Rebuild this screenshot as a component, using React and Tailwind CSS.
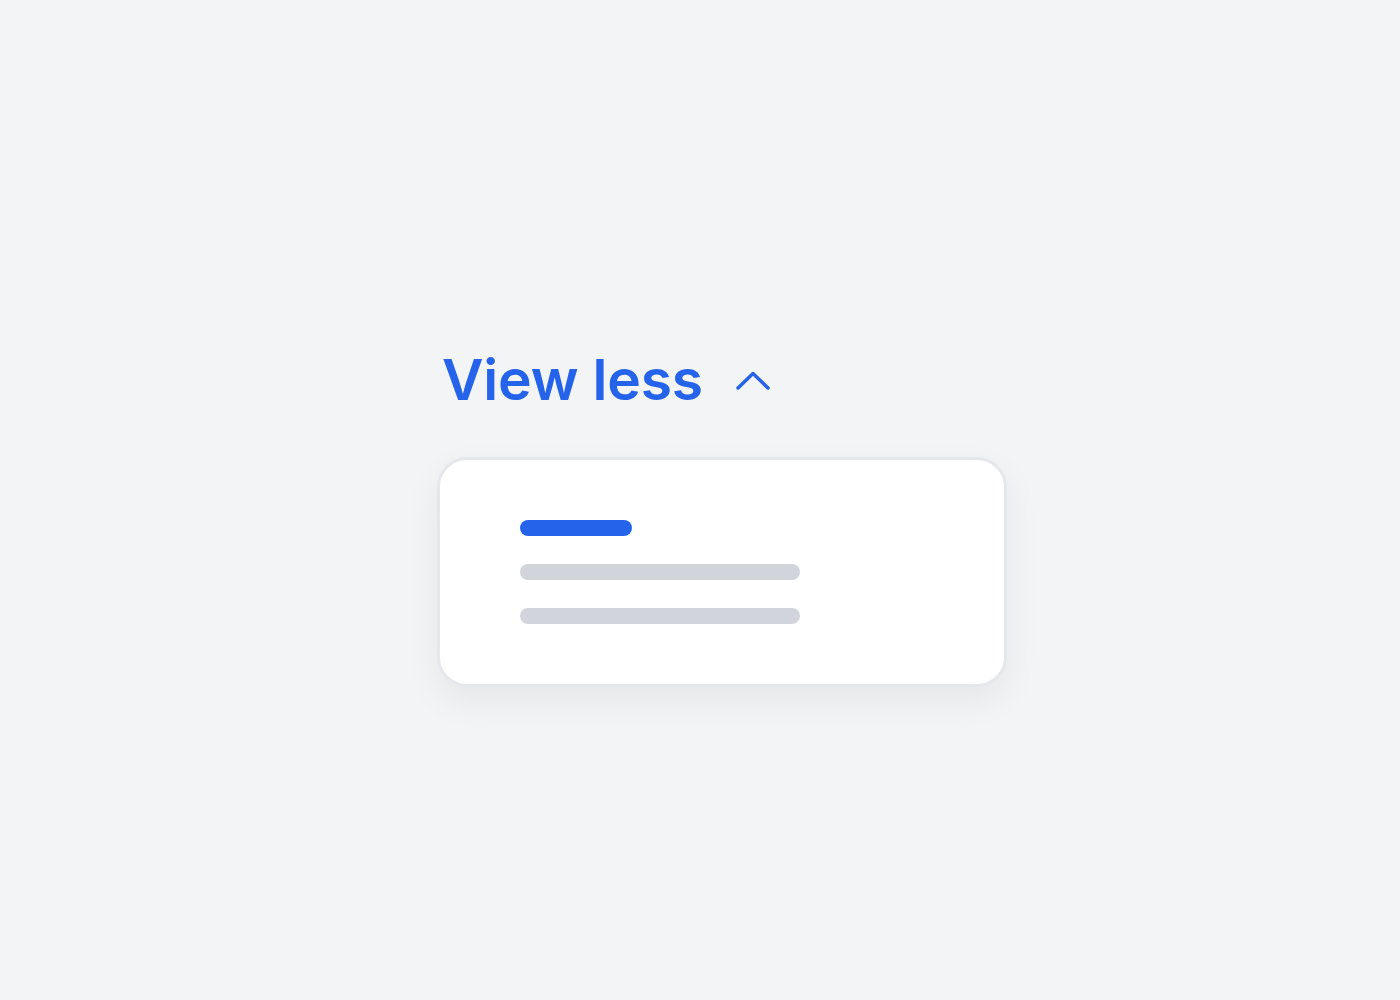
export default function App() {
  return (
    <div className="min-h-screen w-full bg-[#f3f4f6] pl-[437px] pt-[350px]" style={{ fontFamily: "Inter, 'Noto Sans', sans-serif" }}>
      <div className="flex items-center pl-[5px]">
        <span className="text-[57px] leading-[60px] font-semibold text-[#2563eb] tracking-[-0.2px]">View less</span>
        <svg className="ml-[32px]" width="36" height="21" viewBox="0 0 36 21" fill="none">
          <polyline points="3,18 18,3.5 33,18" stroke="#2563eb" strokeWidth="3.5" strokeLinecap="round" strokeLinejoin="round" />
        </svg>
      </div>
      <div className="mt-[47px] w-[570px] h-[230px] rounded-[30px] border-[3px] border-[#e5e7eb] bg-white shadow-[0_14px_36px_rgba(0,0,0,0.06)] pl-[80px] pt-[60px] flex flex-col gap-[28px]">
        <div className="w-[112px] h-[16px] rounded-full bg-[#2563eb]" />
        <div className="w-[280px] h-[16px] rounded-full bg-[#d1d5db]" />
        <div className="w-[280px] h-[16px] rounded-full bg-[#d1d5db]" />
      </div>
    </div>
  );
}
